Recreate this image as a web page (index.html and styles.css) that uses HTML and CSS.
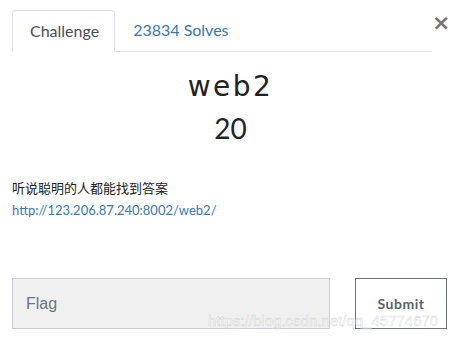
FILE: index.html
```html
<!DOCTYPE html>
<html lang="zh">
<head>
    <meta charset="UTF-8">
    <meta name="viewport" content="width=device-width, initial-scale=1.0">
    <title>web2</title>
    <link rel="stylesheet" href="styles.css">
</head>
<body>
    <div class="modal">
        <div class="modal-header">
            <ul class="tabs">
                <li class="tab active">Challenge</li>
                <li class="tab"><a href="#">23834 Solves</a></li>
            </ul>
            <button type="button" class="close">&times;</button>
        </div>

        <h2 class="challenge-name">web2</h2>
        <h3 class="challenge-value">20</h3>

        <div class="description">
            <p>听说聪明的人都能找到答案</p>
            <a href="#">http://123.206.87.240:8002/web2/</a>
        </div>

        <form class="submit-row">
            <input type="text" class="flag-input" placeholder="Flag">
            <button type="button" class="submit-btn">Submit</button>
        </form>

        <div class="watermark">https://blog.csdn.net/qq_45774670</div>
    </div>
</body>
</html>
```

FILE: styles.css
```css
body { margin: 0; background-color: #fff; font-family: Lato, "Noto Sans CJK SC", sans-serif; color: #212529; }
.modal { position: relative; width: 461px; height: 341px; padding: 10px 0 0 12px; box-sizing: border-box; }

.modal-header { display: flex; align-items: flex-start; }
.tabs { display: flex; list-style: none; margin: 0; padding: 0; width: 420px; border-bottom: 1px solid #dee2e6; }
.tab { font-size: 16px; line-height: 20px; padding: 10px 16px 10px 18px; }
.tab.active { padding-left: 17px; padding-right: 15px; color: #495057; border: 1px solid #dee2e6; border-bottom-color: #fff; border-radius: 4px 4px 0 0; margin-bottom: -1px; }
.tab a { color: #337ab7; text-decoration: none; }
.close { background: none; border: none; padding: 0; margin: 1px 0 0 0; width: 16px; font-size: 22px; line-height: 24px; font-weight: bold; color: #777; font-family: "DejaVu Sans", sans-serif; cursor: pointer; }

.challenge-name { margin: 17px 12px 0 0; text-align: center; font-size: 28px; line-height: 36px; letter-spacing: 2.5px; font-family: "DejaVu Sans", sans-serif; font-weight: normal; color: #222; }
.challenge-value { margin: 6px 12px 0 0; text-align: center; font-weight: normal; font-size: 28px; line-height: 34px; font-family: Lato, sans-serif; }

.description { margin-top: 33px; font-size: 13px; line-height: 20px; }
.description p { margin: 0 0 2px 0; color: #222; font-family: "Noto Sans CJK SC", sans-serif; }
.description a { color: #337ab7; text-decoration: none; font-family: Lato, sans-serif; }

.submit-row { display: flex; gap: 25px; margin-top: 58px; }
.flag-input { width: 318px; height: 51px; box-sizing: border-box; padding: 0 13px; background-color: #f0f0f0; border: 1px solid #ccd0d5; font-size: 16px; font-family: "Liberation Sans", Arial, sans-serif; }
.flag-input::placeholder { color: #6c757d; }
.submit-btn { width: 92px; height: 51px; background-color: #fff; border: 1px solid #6c757d; color: #5a6268; font-weight: bold; font-size: 14px; font-family: Lato, sans-serif; letter-spacing: 0.5px; cursor: pointer; }

.watermark { position: absolute; left: 208px; top: 312px; font-size: 15px; font-family: "Liberation Sans", Arial, sans-serif; color: rgba(255, 255, 255, 0.6); -webkit-text-stroke: 0.4px rgba(160, 160, 160, 0.5); pointer-events: none; }
```
